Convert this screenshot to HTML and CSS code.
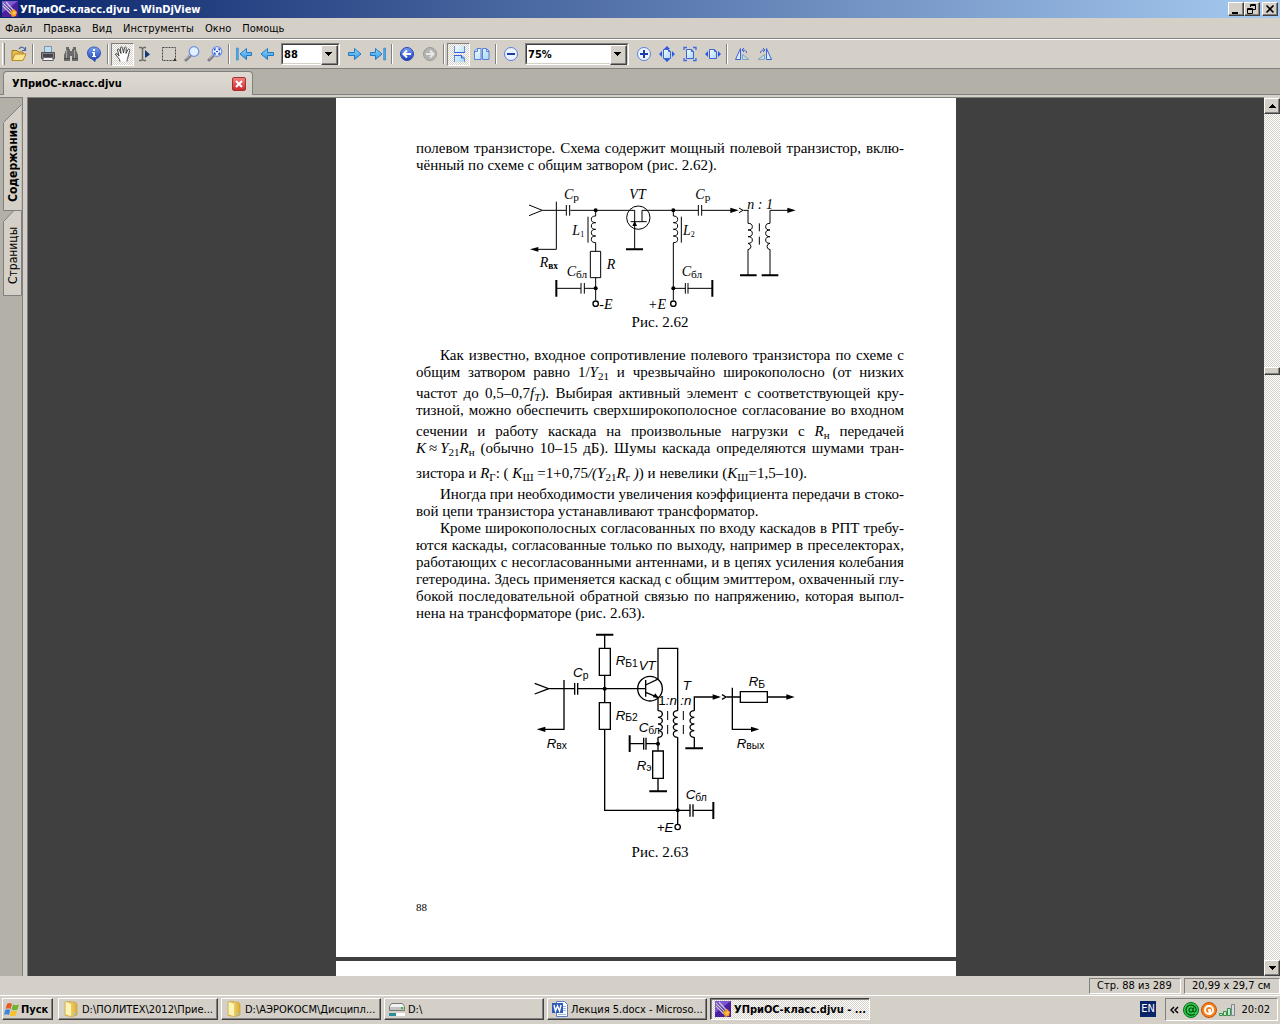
FILE: index.html
```
<!DOCTYPE html>
<html lang="ru">

<head>
	<meta charset="UTF-8">
	<title>УПриОС-класс.djvu - WinDjView</title>
	<link rel="stylesheet" href="styles.css">
</head>

<body>
	<!-- shared shapes -->
	<svg class="defs" width="0" height="0">
		<defs>
			<linearGradient id="blue" x1="0" y1="0" x2="0" y2="1">
				<stop offset="0" stop-color="#8fd4fb" />
				<stop offset="1" stop-color="#2f9be6" />
			</linearGradient>
			<linearGradient id="deep" x1="0" y1="0" x2="0" y2="1">
				<stop offset="0" stop-color="#7aa0f0" />
				<stop offset="1" stop-color="#1a3fb8" />
			</linearGradient>
			<linearGradient id="paper" x1="0" y1="0" x2="1" y2="1">
				<stop offset="0" stop-color="#f4fbff" />
				<stop offset="1" stop-color="#a8d8f4" />
			</linearGradient>
			<linearGradient id="gold" x1="0" y1="0" x2="1" y2="0">
				<stop offset="0" stop-color="#fbeb9c" />
				<stop offset="1" stop-color="#dcae38" />
			</linearGradient>
			<symbol id="app" viewBox="0 0 16 16">
				<path fill="#4a1fa0" d="M0 0h16v16H0z" />
				<path fill="#7d55cf" d="M0 0h16L0 12z" />
				<path stroke="#c9c4d8" stroke-width="1.3" d="M1 2l9 9M4 1l8 9M1 5l8 8" />
				<path stroke="#55407c" stroke-width=".6" d="M2 2l8 8M2 5l8 7" />
				<path fill="#f79a1c" d="M8 11l4-3 3 3-1 4-4 1z" />
				<path fill="#ffc95a" d="M10 12l3-2 1 2-2 2z" />
			</symbol>
			<symbol id="folder" viewBox="0 0 16 16">
				<path fill="#d6ad3c" d="M2 1l6-1v14l-6 1z" />
				<path fill="url(#gold)" stroke="#c49a34" stroke-width=".6" d="M2 1h10l2 2v11l-6 2-6-2z" />
				<path fill="#fdf3b4" d="M3 1l5 2v12l-5-2z" />
				<path fill="#8ec9e0" d="M11 12h2v2h-2z" />
			</symbol>
			<symbol id="right" viewBox="0 0 16 16">
				<path fill="url(#blue)" stroke="#2678c2" d="M1.500 6.500h6v-4l6.500 5.500-6.500 5.500v-4h-6z" />
			</symbol>
			<symbol id="lens" viewBox="0 0 16 16">
				<path stroke="#7d7d8c" stroke-width="3" stroke-linecap="round" d="M2 14l4-4" />
				<path stroke="#b9b9c4" stroke-width="1" d="M2 13l4-4" />
				<circle cx="10" cy="5.500" r="4.800" fill="#e2f0ff" stroke="#6f8ee0" stroke-width="1.200" />
			</symbol>
			<symbol id="page" viewBox="0 0 16 16">
				<path fill="url(#paper)" stroke="#3c62d8" d="M4.500 3.500h5l2 2v7h-7z" />
				<path fill="none" stroke="#3c62d8" d="M9.500 3.500v2h2" />
			</symbol>
		</defs>
	</svg>

	<header class="title-bar">
		<svg class="icon"><use href="#app" /></svg>
		<h1 class="title">УПриОС-класс.djvu - WinDjView</h1>
		<button class="win-btn" aria-label="Свернуть"><svg width="12" height="10"><path d="M2 8h6v2H2z" /></svg></button>
		<button class="win-btn" aria-label="Восстановить"><svg width="12" height="10"><path fill="none" stroke="#000" d="M4.500 3V.500h5v5H7M4 1.500h6M1.500 4.500h5v5h-5zM1 5.500h6" /></svg></button>
		<button class="win-btn win-close" aria-label="Закрыть"><svg width="12" height="10"><path fill="none" stroke="#000" stroke-width="1.600" d="M2.500 1.500l7 7M9.500 1.500l-7 7" /></svg></button>
	</header>

	<nav class="menu">
		<a href="#">Файл</a>
		<a href="#">Правка</a>
		<a href="#">Вид</a>
		<a href="#">Инструменты</a>
		<a href="#">Окно</a>
		<a href="#">Помощь</a>
	</nav>

	<div class="toolbar">
		<span class="grip"></span>
		<button class="tool" aria-label="Открыть"><svg class="icon" viewBox="0 0 16 16"><path fill="#e8c05a" stroke="#a87818" d="M1 14V4.500h5l1 1.500h5v3" /><path fill="#fbe48e" stroke="#b98a20" d="M1 14.500l3-6.500h11l-3 6.500z" /><path fill="none" stroke="#4a6a9c" stroke-width="1.200" d="M8 3c2-3 5-2 6 1M14.500 1v3.500H11" /></svg></button>
		<span class="sep"></span>
		<button class="tool" aria-label="Печать"><svg class="icon" viewBox="0 0 16 16"><path fill="#b9def6" stroke="#7d94a8" d="M4.500.500h7v6h-7z" /><path fill="#85858a" stroke="#4c4c52" d="M1.500 6.500h13v6h-13z" /><path fill="#44444a" d="M3 8h10v3H3z" /><path fill="#f2f2f2" stroke="#66666c" d="M3.500 11.500h9l1 3h-11z" /></svg></button>
		<button class="tool" aria-label="Найти"><svg class="icon" viewBox="0 0 16 16"><path fill="#6a6a6a" d="M3 1h3v2h1v2h2V3h1V1h3v3l2 5v6H9v-5H7v5H1V9l2-5z" /><path stroke="#a6a6a6" d="M3.500 4v9M11.500 4v9" /><path stroke="#4a4a4a" d="M1 12.500h6M9 12.500h6" /></svg></button>
		<button class="tool" aria-label="Сведения"><svg class="icon" viewBox="0 0 16 16"><path fill="url(#deep)" stroke="#2346a8" stroke-width=".8" d="M8 1c4 0 6.500 2.500 6.500 6S12 12.500 9.500 13L9 15.500 6 13C3.500 12.500 1.500 10.500 1.500 7S4 1 8 1z" /><path fill="#fff" d="M7 3h2v2H7zM6 6h3v4h1v1H6v-1h1V7H6z" /></svg></button>
		<span class="sep"></span>
		<button class="tool on" aria-label="Рука"><svg class="icon" viewBox="0 0 16 16"><path fill="#fff" stroke="#333" stroke-width=".9" d="M5 15.500c0-3-3.500-5-4.500-7.500 1-1 2 0 3.500 2L2.500 4c0-1.500 1.500-1.500 2 0L6 7.500 5.500 2c.3-1.500 1.700-1.500 2 0L8.500 7 9.500 1.800c.5-1.300 1.800-1 1.700.5L11 7.500l2-4c.8-1 2-.3 1.700 1L13 11c-.5 2-1 3-1 4.500" /></svg></button>
		<button class="tool" aria-label="Выделить текст"><svg class="icon" viewBox="0 0 16 16"><path fill="none" stroke="#6a6a6a" stroke-width="1.500" d="M1 1.500h2l1.500 1 1.500-1h2M1 14.500h2l1.500-1 1.500 1h2M4.500 2v12" /><path fill="#123a78" d="M7 4l5 4.500L7 12z" /></svg></button>
		<button class="tool" aria-label="Выделить область"><svg class="icon" viewBox="0 0 16 16"><path fill="none" stroke="#444" stroke-dasharray="2 1" d="M1.500 1.500h13v13h-13z" /><path fill="#333" d="M13 12l3 3h-3z" /></svg></button>
		<button class="tool" aria-label="Лупа"><svg class="icon"><use href="#lens" /></svg></button>
		<button class="tool" aria-label="Увеличить область"><svg class="icon" viewBox="0 0 16 16"><use href="#lens" /><path fill="none" stroke="#2344c8" stroke-width="1.200" d="M7.500 4.500v-1.500h1.500M11 3h1.500v1.500M12.500 6.500V8H11M9 8H7.500V6.500M9 5.500h2" /></svg></button>
		<span class="sep"></span>
		<button class="tool" aria-label="Первая страница"><svg class="icon" viewBox="0 0 16 16"><path fill="#49b0ee" stroke="#2678c2" stroke-width=".6" d="M.500 2h1.800v12H.500z" /><path fill="url(#blue)" stroke="#2678c2" d="M15.500 6.500h-5v-4L4 8l6.500 5.500v-4h5z" /></svg></button>
		<button class="tool" aria-label="Предыдущая страница"><svg class="icon flip"><use href="#right" /></svg></button>
		<span class="combo combo-page"><select aria-label="Страница"><option>88</option></select></span>
		<button class="tool" aria-label="Следующая страница"><svg class="icon"><use href="#right" /></svg></button>
		<button class="tool" aria-label="Последняя страница"><svg class="icon flip" viewBox="0 0 16 16"><path fill="#49b0ee" stroke="#2678c2" stroke-width=".6" d="M.500 2h1.800v12H.500z" /><path fill="url(#blue)" stroke="#2678c2" d="M15.500 6.500h-5v-4L4 8l6.500 5.500v-4h5z" /></svg></button>
		<span class="sep"></span>
		<button class="tool" aria-label="Назад"><svg class="icon" viewBox="0 0 16 16"><circle cx="8" cy="8" r="6.500" fill="url(#deep)" stroke="#2346b4" /><path fill="none" stroke="#fff" stroke-width="2" d="M12 8H5M8 4.500L4.500 8 8 11.500" /></svg></button>
		<button class="tool" aria-label="Вперёд"><svg class="icon" viewBox="0 0 16 16"><circle cx="8" cy="8" r="6.500" fill="#b4b4b2" stroke="#9a9a98" /><path fill="none" stroke="#e8e8e6" stroke-width="2" d="M4 8h7M8 4.500l3.500 3.500L8 11.500" /></svg></button>
		<span class="sep"></span>
		<button class="tool on" aria-label="Непрерывно"><svg class="icon" viewBox="0 0 16 16"><path fill="url(#paper)" stroke="#6a90dc" d="M3.500 0v6.500h10V0M3.500 16V9.500h7l3 2.500v4" /><path fill="none" stroke="#3c62d8" d="M3 6.500h11M3 9.500h8M10.500 9.500v2.500h3" /></svg></button>
		<button class="tool" aria-label="Разворот"><svg class="icon" viewBox="0 0 16 16"><path fill="url(#paper)" stroke="#5580dc" d="M.500 5l2.500-2.500h4v11H.500zM8.500 2.500h4L15 5v8.500H8.500z" /><path fill="none" stroke="#5580dc" d="M3.500 3v2.500H1M12.500 3v2.500H15" /></svg></button>
		<span class="sep"></span>
		<button class="tool" aria-label="Уменьшить"><svg class="icon" viewBox="0 0 16 16"><circle cx="8" cy="8" r="6.500" fill="#eef4ff" stroke="#5c7ce0" /><path fill="#1c3ca8" d="M4 7h8v2H4z" /></svg></button>
		<span class="combo combo-zoom"><select aria-label="Масштаб"><option>75%</option></select></span>
		<button class="tool" aria-label="Увеличить"><svg class="icon" viewBox="0 0 16 16"><circle cx="8" cy="8" r="6.500" fill="#eef4ff" stroke="#5c7ce0" /><path fill="#1c3ca8" d="M4 7h3V4h2v3h3v2H9v3H7V9H4z" /></svg></button>
		<button class="tool" aria-label="По странице"><svg class="icon" viewBox="0 0 16 16"><use href="#page" /><path fill="#2a5ae0" d="M8 0l3 3H5zM8 16l3-3H5zM0 8l3-3v6zM16 8l-3-3v6z" /></svg></button>
		<button class="tool" aria-label="Реальный размер"><svg class="icon" viewBox="0 0 16 16"><use href="#page" /><path fill="none" stroke="#3c6ae4" stroke-width="1.300" d="M2 4V1.500h3M11 1.500h3V4M14 12v2.500h-3M5 14.500H2V12" /></svg></button>
		<button class="tool" aria-label="По ширине"><svg class="icon" viewBox="0 0 16 16"><use href="#page" /><path fill="#2a5ae0" d="M0 8l3-3v6zM16 8l-3-3v6z" /></svg></button>
		<span class="sep"></span>
		<button class="tool" aria-label="Повернуть влево"><svg class="icon" viewBox="0 0 16 16"><path fill="#d8f0fc" stroke="#3c62d8" d="M1.500 13.500l5-11v11z" /><path fill="#b8dcec" stroke="#8aa4b8" d="M8.500 13.500v-5l6.500 5z" /><path fill="none" stroke="#3c62d8" d="M12.500 7c0-2-1-3-4-3M10 2L8 4l2 2" /></svg></button>
		<button class="tool" aria-label="Повернуть вправо"><svg class="icon flip" viewBox="0 0 16 16"><path fill="#d8f0fc" stroke="#3c62d8" d="M1.500 13.500l5-11v11z" /><path fill="#b8dcec" stroke="#8aa4b8" d="M8.500 13.500v-5l6.500 5z" /><path fill="none" stroke="#3c62d8" d="M12.500 7c0-2-1-3-4-3M10 2L8 4l2 2" /></svg></button>
	</div>

	<div class="tabs">
		<div class="tab">
			<span>УПриОС-класс.djvu</span>
			<button class="tab-close" aria-label="Закрыть вкладку"><svg width="12" height="12"><path stroke="#fff" stroke-width="2" d="M3 3l6 6M9 3l-6 6" /></svg></button>
		</div>
	</div>

	<div class="work">
		<aside class="side">
			<button class="side-tab side-active">
				<svg width="19" height="107"><path fill="#d4d0c8" stroke="#808080" d="M18.500.500L.500 18.500v88h18" /></svg>
				<span>Содержание</span>
			</button>
			<button class="side-tab side-pages">
				<svg width="19" height="85"><path fill="#d4d0c8" stroke="#808080" d="M10.500 0L.500 10.500v74h18V0" /></svg>
				<span>Страницы</span>
			</button>
		</aside>

		<main class="viewer">
			<article class="page">
				<p>
					<span class="line">полевом транзисторе. Схема содержит мощный полевой транзистор, вклю-</span>
					<span class="line last">чённый по схеме с общим затвором (рис. 2.62).</span>
				</p>

				<figure>
					<svg class="scheme scheme-1" viewBox="0 0 900 390">
						<g class="wire">
							<path d="M57 75l40 16-40 16M57 91m40 0h72M181 91h193M396 91h169M575 91h90M716 91h-16M139 65v143H80" />
							<path d="M257 91v17M257 188v26M257 293v67M241 214h31v79h-31zM234 110v78" />
							<path d="M257 108a13 10 0 0 0 0 20a13 10 0 0 0 0 20a13 10 0 0 0 0 20a13 10 0 0 0 0 20" />
							<path d="M490 91v17M490 188v172M514 110v78" />
							<path d="M490 108a13 10 0 0 1 0 20a13 10 0 0 1 0 20a13 10 0 0 1 0 20a13 10 0 0 1 0 20" />
							<path d="M374 91v116M396 91v34M362 125h48" />
							<circle cx="385" cy="113" r="35" />
							<path d="M169 75v32M179 75v32M565 75v32M575 75v32" />
							<path d="M139 325h74M223 325h34M213 309v32M223 309v32M490 325h36M533 325h74M526 309v32M534 309v32" />
							<path d="M687 84l12 7-12 7M714 91v39M714 208v78M780 286v-78M780 130V91h56M748 130v24M748 170v24" />
							<path d="M714 130a13 10 0 0 1 0 20a13 10 0 0 1 0 20a13 10 0 0 1 0 20a13 10 0 0 1 0 19" />
							<path d="M780 130a13 10 0 0 0 0 20a13 10 0 0 0 0 20a13 10 0 0 0 0 20a13 10 0 0 0 0 19" />
						</g>
						<path class="bar" d="M348 208h51M139 300v50M607 300v50M690 286h50M755 286h50" />
						<g class="solid">
							<path d="M60 208l25-7v14zM686 91l-25-8v16zM857 91l-25-8v16zM374 122l-7 16h14z" />
							<circle cx="257" cy="91" r="6" />
							<circle cx="490" cy="91" r="6" />
							<circle cx="257" cy="325" r="6" />
							<circle cx="490" cy="325" r="6" />
						</g>
						<circle class="pin" cx="257" cy="371" r="8" />
						<circle class="pin" cx="490" cy="371" r="8" />
						<g class="serif">
							<text x="162" y="58">C<tspan class="sub" dy="6">р</tspan></text>
							<text x="358" y="58">VT</text>
							<text x="556" y="58">C<tspan class="sub" dy="6">р</tspan></text>
							<text x="187" y="165">L<tspan class="index" dy="6">1</tspan></text>
							<text x="519" y="165">L<tspan class="index" dy="6">2</tspan></text>
							<text x="712" y="88">n : 1</text>
							<text x="89" y="260">R<tspan class="sub bold" dy="6">вх</tspan></text>
							<text x="290" y="266">R</text>
							<text x="170" y="288">C<tspan class="sub" dy="6">бл</tspan></text>
							<text x="515" y="288">C<tspan class="sub" dy="6">бл</tspan></text>
							<text x="268" y="386">-E</text>
							<text x="414" y="386">+E</text>
						</g>
					</svg>
					<figcaption>Рис. 2.62</figcaption>
				</figure>

				<p>
					<span class="line indent">Как известно, входное сопротивление полевого транзистора по схеме с</span>
					<span class="line">общим затвором равно 1/<i>Y</i><sub>21</sub> и чрезвычайно широкополосно (от низких</span>
					<span class="line tall">частот до 0,5–0,7<i>f<sub>T</sub></i>). Выбирая активный элемент с соответствующей кру-</span>
					<span class="line">тизной, можно обеспечить сверхширокополосное согласование во входном</span>
					<span class="line tall">сечении и работу каскада на произвольные нагрузки с <i>R</i><sub>н</sub> передачей</span>
					<span class="line"><i>K</i>&thinsp;≈&thinsp;<i>Y</i><sub>21</sub><i>R</i><sub>н</sub> (обычно 10–15 дБ). Шумы каскада определяются шумами тран-</span>
					<span class="line taller last">зистора и <i>R</i><sub>Г</sub>: ( <i>K</i><sub>Ш</sub> =1+0,75<i>/(Y</i><sub>21</sub><i>R</i><sub>г</sub> <i>)</i>) и невелики (<i>K</i><sub>Ш</sub>=1,5–10).</span>
				</p>
				<p>
					<span class="line tall indent">Иногда при необходимости увеличения коэффициента передачи в стоко-</span>
					<span class="line last">вой цепи транзистора устанавливают трансформатор.</span>
				</p>
				<p>
					<span class="line indent">Кроме широкополосных согласованных по входу каскадов в РПТ требу-</span>
					<span class="line">ются каскады, согласованные только по выходу, например в преселекторах,</span>
					<span class="line">работающих с несогласованными антеннами, и в цепях усиления колебания</span>
					<span class="line">гетеродина. Здесь применяется каскад с общим эмиттером, охваченный глу-</span>
					<span class="line">бокой последовательной обратной связью по напряжению, которая выпол-</span>
					<span class="line last">нена на трансформаторе (рис. 2.63).</span>
				</p>

				<figure>
					<svg class="scheme scheme-2" viewBox="0 0 900 645">
						<g class="wire thick">
							<path d="M74 175l42 16-42 16M116 191h78M204 191h203M162 165v148H105" />
							<path d="M284 29v41M268 70h33v81h-33zM284 151v82M268 233h33v80h-33zM284 313v243h219" />
							<path d="M194 174v35M203 174v35M407 165v50M407 180l37-18V70h59v187M407 202l37 15v40" />
							<circle cx="420" cy="191" r="37" />
							<path d="M444 257a13 10 0 0 1 0 20a13 10 0 0 1 0 20a13 10 0 0 1 0 20a13 10 0 0 1 0 20" />
							<path d="M503 257a13 10 0 0 0 0 20a13 10 0 0 0 0 20a13 10 0 0 0 0 20a13 10 0 0 0 0 20" />
							<path d="M553 257a13 10 0 0 0 0 20a13 10 0 0 0 0 20a13 10 0 0 0 0 20a13 10 0 0 0 0 20" />
							<path d="M444 337v41M428 378h32v82h-32zM444 460v39M503 337v260M553 257v-41h60M553 337v33" />
							<path d="M359 356h42M408 356h36M401 338v36M408 338v36M503 556h37M549 556h61M540 538v37M549 538v37" />
							<path d="M636 209l12 7-12 7M650 216h41M667 188v125h60M691 200h81v32h-81zM772 216h65" />
						</g>
						<path class="wire" d="M473 258v27M473 300v27M520 258v27M520 300v27" />
						<path class="bar" d="M258 29h52M359 331v50M526 370h53M418 499h53M610 531v51" />
						<g class="solid">
							<path d="M80 313l26-8v16zM633 216l-25-8v16zM854 216l-25-8v16zM748 313l-25-8v16zM446 219l-18-2 8-12z" />
							<circle cx="284" cy="191" r="6" />
							<circle cx="444" cy="356" r="6" />
							<circle cx="503" cy="556" r="6" />
						</g>
						<circle class="pin" cx="503" cy="606" r="8" />
						<g class="sans">
							<text x="317" y="121">R<tspan class="sub" dy="4">Б1</tspan></text>
							<text x="386" y="136">VT</text>
							<text x="189" y="157">C<tspan class="sub" dy="6">р</tspan></text>
							<text x="518" y="195">T</text>
							<text x="716" y="184">R<tspan class="sub" dy="4">Б</tspan></text>
							<text x="445" y="241"><tspan class="up">1</tspan>:n</text>
							<text x="511" y="241">:n</text>
							<text x="317" y="285">R<tspan class="sub" dy="4">Б2</tspan></text>
							<text x="386" y="322">C<tspan class="sub" dy="6">бл</tspan></text>
							<text x="110" y="368">R<tspan class="sub" dy="5">вх</tspan></text>
							<text x="680" y="368">R<tspan class="sub" dy="5">вых</tspan></text>
							<text x="380" y="434">R<tspan class="sub" dy="5">э</tspan></text>
							<text x="527" y="523">C<tspan class="sub" dy="6">бл</tspan></text>
							<text x="440" y="620">+E</text>
						</g>
					</svg>
					<figcaption>Рис. 2.63</figcaption>
				</figure>
				<footer class="folio">88</footer>
			</article>
			<article class="page page-next"></article>
		</main>

		<div class="scroll">
			<button class="scroll-btn" aria-label="Вверх"><svg width="7" height="4"><path d="M3 0h1v1h1v1h1v1h1v1H0V3h1V2h1V1h1z" /></svg></button>
			<span class="track-above"></span>
			<span class="thumb"></span>
			<span class="track-below"></span>
			<button class="scroll-btn" aria-label="Вниз"><svg width="7" height="4"><path d="M0 0h7v1H6v1H5v1H4v1H3V3H2V2H1V1H0z" /></svg></button>
		</div>
	</div>

	<div class="status">
		<span class="pane pane-page">Стр. 88 из 289</span>
		<span class="pane pane-size">20,99 x 29,7 см</span>
	</div>

	<footer class="taskbar">
		<button class="task start"><svg class="icon" viewBox="0 0 16 16"><path fill="#ea5a24" d="M3 3c2-1.500 3.500-1 5 0L6.500 8C5 7 3.500 7 1.500 8z" /><path fill="#6cb52c" d="M9 3.500c2 1 3.500 1 6 0L13.500 8.500c-2 1-4 1-6 0z" /><path fill="#3f86dc" d="M1.200 9c2-1 3.500-1 5 0L5 14c-2-1-3.500-1-5 0z" /><path fill="#fbc02a" d="M7.200 9.500c2 1 3.500 1 6 0L11.500 14.500c-2 1-4 1-5.800 0z" /></svg>Пуск</button>
		<button class="task"><svg class="icon"><use href="#folder" /></svg><span>D:\ПОЛИТЕХ\2012\Прие...</span></button>
		<button class="task"><svg class="icon"><use href="#folder" /></svg><span>D:\АЭРОКОСМ\Дисципл...</span></button>
		<button class="task"><svg class="icon" viewBox="0 0 16 16"><path fill="#f2f2f2" stroke="#777" d="M2.500 2.500h11l2 3v4H.500v-4z" /><path fill="#c4c4c4" d="M1 6h14v3H1z" /><path fill="#3cba3c" d="M12 6h2v2h-2z" /><path fill="#fff" d="M0 12h16v3H0z" /><path fill="#2a8f98" d="M0 12h7v3H0z" /></svg><span>D:\</span></button>
		<button class="task"><svg class="icon" viewBox="0 0 16 16"><path fill="#fff" stroke="#5b7fc4" d="M4.500.500h8l3 3v12h-11z" /><path stroke="#9db6e2" d="M11 5.500h3M11 7.500h3M11 9.500h3M6 13.500h8" /><path fill="#2c5cb8" d="M0 2h11v10H0z" /><path fill="none" stroke="#fff" stroke-width="1.400" d="M2 4l1.500 6 2-5 2 5L9 4" /></svg><span>Лекция 5.docx - Microso...</span></button>
		<button class="task active"><svg class="icon"><use href="#app" /></svg><span>УПриОС-класс.djvu - ...</span></button>
		<span class="lang">EN</span>
		<div class="tray">
			<svg width="9" height="8"><path fill="none" stroke="#000" stroke-width="1.500" d="M4 1L1 4l3 3M8 1L5 4l3 3" /></svg>
			<svg class="icon agent" viewBox="0 0 16 16"><circle cx="8" cy="8" r="7.500" fill="#2fd04c" stroke="#0b6e1e" /><path fill="none" stroke="#064a12" stroke-width="1.100" d="M12 12c-4 2.500-9 .500-9-4s5-6 8-4 2.500 6 .500 6-1.500-2-1-4.500M10 8a2 2 0 1 0-4 0 2 2 0 0 0 4 0" /></svg>
			<svg class="icon" viewBox="0 0 16 16"><circle cx="8" cy="8" r="7.500" fill="#f5821e" stroke="#c4500a" /><circle cx="8" cy="8" r="4" fill="none" stroke="#fff" stroke-width="2" /><path fill="#fff" d="M7 7h3v6H8z" /></svg>
			<svg class="icon" viewBox="0 0 16 16"><path fill="#bff0c8" stroke="#3c8c50" d="M.500 11.500h3v2h-3zM4.500 9.500h3v4h-3zM8.500 6.500h3v7h-3z" /><path fill="#dcdcdc" stroke="#7a8a90" d="M12.500 2.500h3v11h-3z" /></svg>
			<time>20:02</time>
		</div>
	</footer>
</body>

</html>
```
FILE: styles.css
```
* {
	box-sizing: border-box;
}

body {
	display: flex;
	flex-direction: column;
	height: 100vh;
	margin: 0;
	overflow: hidden;
	background: #d4d0c8;
	color: #000;
	font: 11px "DejaVu Sans Condensed", "DejaVu Sans", sans-serif;
}

button {
	padding: 0;
	border: 0;
	background: #d4d0c8;
	color: #000;
	font: inherit;
}

svg {
	display: block;
	flex: none;
}

.defs {
	position: absolute;
}

.icon {
	width: 16px;
	height: 16px;
}

.flip {
	transform: scaleX(-1);
}

/* title and menu */

.title-bar {
	display: flex;
	align-items: center;
	height: 18px;
	padding: 0 2px;
	background: linear-gradient(90deg, #0a246a, #a6caf0);
}

.title {
	flex: 1;
	margin: 0 0 0 2px;
	color: #fff;
	font-size: 11px;
}

.win-btn,
.scroll-btn {
	display: flex;
	align-items: center;
	justify-content: center;
	width: 16px;
	height: 14px;
	border: 1px solid;
	border-color: #fff #404040 #404040 #fff;
	box-shadow: inset -1px -1px #808080;
}

.win-close {
	margin-left: 2px;
}

.menu {
	display: flex;
	align-items: center;
	gap: 11px;
	height: 21px;
	padding: 0 5px;
	border-bottom: 1px solid #808080;
}

.menu a {
	color: #000;
	text-decoration: none;
}

/* toolbar */

.toolbar {
	display: flex;
	align-items: center;
	height: 30px;
	border-top: 1px solid #fff;
	border-bottom: 1px solid #808080;
}

.grip {
	width: 3px;
	height: 22px;
	margin: 0 2px;
	border-left: 1px solid #fff;
	border-right: 1px solid #808080;
}

.tool {
	display: flex;
	align-items: center;
	justify-content: center;
	width: 23px;
	height: 23px;
}

.on {
	border: 1px solid;
	border-color: #808080 #fff #fff #808080;
}

.on,
.active,
.scroll {
	background: repeating-conic-gradient(#fff 0 25%, #d4d0c8 0 50%) 0 0 / 2px 2px;
}

.sep {
	width: 2px;
	height: 20px;
	margin: 0 2px;
	border-left: 1px solid #808080;
	border-right: 1px solid #fff;
}

.combo {
	position: relative;
	height: 22px;
	margin: 0 3px;
	border: 1px solid;
	border-color: #808080 #fff #fff #808080;
}

.combo-page {
	width: 59px;
}

.combo-zoom {
	width: 104px;
}

.combo select {
	width: 100%;
	height: 20px;
	padding: 0 1px;
	border: 1px solid;
	border-color: #404040 #d4d0c8 #d4d0c8 #404040;
	border-radius: 0;
	appearance: none;
	background: #fff;
	color: #000;
	font: bold 11px "DejaVu Sans Condensed", sans-serif;
}

.combo::after {
	content: "";
	position: absolute;
	top: 1px;
	right: 1px;
	width: 15px;
	height: 18px;
	border: 1px solid;
	border-color: #fff #404040 #404040 #fff;
	background: linear-gradient(#000, #000) 3px 6px / 7px 1px no-repeat, linear-gradient(#000, #000) 4px 7px / 5px 1px no-repeat, linear-gradient(#000, #000) 5px 8px / 3px 1px no-repeat, linear-gradient(#000, #000) 6px 9px / 1px 1px no-repeat, #d4d0c8;
	box-shadow: inset -1px -1px #808080;
	pointer-events: none;
}

/* document tabs */

.tabs {
	display: flex;
	align-items: flex-end;
	height: 26px;
	padding: 0 3px;
	border-bottom: 1px solid #808080;
	background: #b3b0a8;
}

.tab {
	display: flex;
	align-items: center;
	justify-content: space-between;
	width: 250px;
	height: 24px;
	margin-bottom: -1px;
	padding: 0 6px 0 8px;
	border: 1px solid #808080;
	border-bottom: 0;
	border-radius: 4px 4px 0 0;
	background: linear-gradient(#dedad2, #d4d0c8);
	font-weight: bold;
}

.tab-close {
	width: 14px;
	height: 14px;
	border: 1px solid #a83030;
	border-radius: 2px;
	background: linear-gradient(#f08080, #cc2a2a);
}

/* working area */

.work {
	display: flex;
	flex: 1;
	min-height: 0;
	padding-top: 2px;
}

.side {
	width: 23px;
	padding-top: 6px;
	border-top: 1px solid #808080;
	border-right: 1px solid #808080;
	background: #b3b0a8;
}

.side-tab {
	position: relative;
	display: flex;
	justify-content: center;
	width: 19px;
	margin-left: 3px;
	background: none;
	font-size: 12px;
}

.side-tab svg {
	position: absolute;
	top: 0;
	left: 0;
}

.side-tab span {
	position: relative;
	writing-mode: vertical-rl;
	transform: rotate(180deg);
}

.side-active {
	height: 107px;
	padding-top: 10px;
	font-weight: bold;
}

.side-pages {
	height: 85px;
	padding-top: 4px;
}

.viewer {
	flex: 1;
	margin-left: 4px;
	overflow: hidden;
	border-top: 1px solid #808080;
	border-left: 1px solid #808080;
	background: #404040;
}

.page {
	width: 620px;
	height: 859px;
	margin: 0 auto 4px;
	padding: 42px 52px 0 80px;
	background: #fff;
	font: 15px/17px "Liberation Serif", serif;
}

.page p {
	margin: 0;
}

.line {
	display: block;
	text-align-last: justify;
	white-space: nowrap;
}

.last {
	text-align-last: left;
}

.indent {
	padding-left: 24px;
}

.tall {
	padding-top: 4px;
}

.taller {
	padding-top: 8px;
}

.line sub {
	font-size: 11px;
	line-height: 0;
	vertical-align: -3px;
}

figure {
	margin: 6px 0 16px;
}

.page p + figure:last-of-type {
	margin: 3px 0 0;
}

figcaption {
	margin-top: 4px;
	text-align: center;
}

.scheme {
	width: 300px;
	margin: 0 auto;
	overflow: visible;
}

.scheme-1 {
	height: 130px;
}

.scheme-2 {
	height: 215px;
}

.wire {
	fill: none;
	stroke: #000;
	stroke-width: 3;
}

.thick {
	stroke-width: 4;
}

.bar {
	fill: none;
	stroke: #000;
	stroke-width: 6;
}

.pin {
	fill: #fff;
	stroke: #000;
	stroke-width: 4;
}

.serif {
	font: italic 42px "Liberation Serif", serif;
}

.sans {
	font: italic 40px "Liberation Sans", sans-serif;
}

.sub {
	font-size: 34px;
	font-style: normal;
}

.sans .sub {
	font-size: 31px;
}

.index {
	font-size: 24px;
	font-style: normal;
}

.bold {
	font-weight: bold;
	font-size: 28px;
}

.up {
	font-style: normal;
}

.folio {
	margin-top: 38px;
	font-size: 11px;
}

/* scroll bar */

.scroll {
	display: flex;
	flex-direction: column;
	width: 16px;
	margin-top: 1px;
}

.scroll-btn {
	height: 16px;
}

.track-above {
	flex: 253;
}

.track-below {
	flex: 585;
}

.thumb {
	height: 8px;
	border: 1px solid;
	border-color: #fff #404040 #404040 #fff;
	background: #d4d0c8;
	box-shadow: inset -1px -1px #808080;
}

/* status and task bar */

.status {
	display: flex;
	justify-content: flex-end;
	gap: 3px;
	height: 19px;
	padding: 2px 0 1px;
}

.pane {
	padding-left: 7px;
	border: 1px solid;
	border-color: #808080 #fff #fff #808080;
	line-height: 14px;
}

.pane-page {
	width: 92px;
}

.pane-size {
	width: 96px;
}

.taskbar {
	display: flex;
	gap: 3px;
	height: 29px;
	padding: 2px 2px 4px;
	border-top: 1px solid #fff;
}

.task {
	display: flex;
	align-items: center;
	gap: 3px;
	width: 160px;
	height: 22px;
	padding: 0 4px;
	border: 1px solid;
	border-color: #fff #404040 #404040 #fff;
	box-shadow: inset -1px -1px #808080;
	white-space: nowrap;
}

.start {
	gap: 1px;
	width: 51px;
	margin-right: 2px;
	padding: 0 1px;
	font-weight: bold;
}

.active {
	border-color: #404040 #fff #fff #404040;
	box-shadow: inset 1px 1px #808080;
	font-weight: bold;
}

.lang {
	align-self: center;
	width: 16px;
	height: 16px;
	margin-left: auto;
	background: #0a246a;
	color: #fff;
	line-height: 16px;
	text-align: center;
}

.tray {
	display: flex;
	align-items: center;
	gap: 2px;
	width: 113px;
	height: 23px;
	margin-left: 6px;
	padding: 0 4px;
	border: 1px solid;
	border-color: #808080 #fff #fff #808080;
}

.agent {
	margin-left: 2px;
}

.tray time {
	margin-left: auto;
	padding-right: 3px;
}
```
